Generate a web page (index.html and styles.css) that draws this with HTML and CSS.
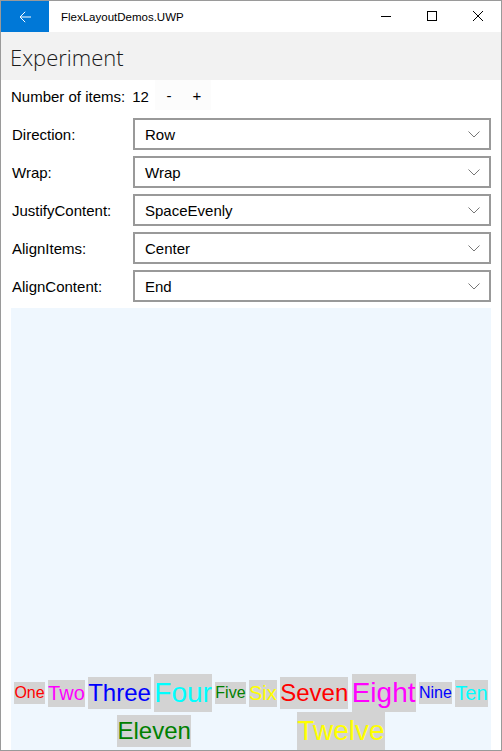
FILE: index.html
```html
<!DOCTYPE html>
<html>
<head>
<meta charset="utf-8">
<link rel="stylesheet" href="styles.css">
</head>
<body>
<div class="window">
  <div class="titlebar">
    <div class="back">
      <svg width="12" height="12" viewBox="0 0 12 12"><path d="M12 6H1.2M6.2 0.8L1 6l5.2 5.2" stroke="#fff" stroke-width="1" fill="none"/></svg>
    </div>
    <div class="apptitle">FlexLayoutDemos.UWP</div>
    <div class="captions">
      <div class="cbtn"><svg width="10" height="10" viewBox="0 0 10 10"><path d="M0 5.5H10" stroke="#000" fill="none"/></svg></div>
      <div class="cbtn"><svg width="10" height="10" viewBox="0 0 10 10"><rect x="0.5" y="0.5" width="9" height="9" stroke="#000" fill="none"/></svg></div>
      <div class="cbtn"><svg width="10" height="10" viewBox="0 0 10 10"><path d="M0 0L10 10M10 0L0 10" stroke="#000" fill="none"/></svg></div>
    </div>
  </div>
  <div class="pageheader">Experiment</div>
  <div class="content">
    <div class="countrow">
      <span>Number of items:</span><span class="count">12</span>
      <span class="stepper"><span class="sbtn">-</span><span class="sbtn">+</span></span>
    </div>
    <div class="form">
      <div class="label">Direction:</div>
      <div class="combo"><span>Row</span><svg width="12" height="7" viewBox="0 0 12 7"><path d="M0.5 0.5L6 6L11.5 0.5" stroke="#777" fill="none"/></svg></div>
      <div class="label">Wrap:</div>
      <div class="combo"><span>Wrap</span><svg width="12" height="7" viewBox="0 0 12 7"><path d="M0.5 0.5L6 6L11.5 0.5" stroke="#777" fill="none"/></svg></div>
      <div class="label">JustifyContent:</div>
      <div class="combo"><span>SpaceEvenly</span><svg width="12" height="7" viewBox="0 0 12 7"><path d="M0.5 0.5L6 6L11.5 0.5" stroke="#777" fill="none"/></svg></div>
      <div class="label">AlignItems:</div>
      <div class="combo"><span>Center</span><svg width="12" height="7" viewBox="0 0 12 7"><path d="M0.5 0.5L6 6L11.5 0.5" stroke="#777" fill="none"/></svg></div>
      <div class="label">AlignContent:</div>
      <div class="combo"><span>End</span><svg width="12" height="7" viewBox="0 0 12 7"><path d="M0.5 0.5L6 6L11.5 0.5" stroke="#777" fill="none"/></svg></div>
    </div>
    <div class="flexarea">
      <div class="item s16 red">One</div>
      <div class="item s20 magenta">Two</div>
      <div class="item s24 blue">Three</div>
      <div class="item s28 cyan">Four</div>
      <div class="item s16 green">Five</div>
      <div class="item s20 yellow">Six</div>
      <div class="item s24 red">Seven</div>
      <div class="item s28 magenta">Eight</div>
      <div class="item s16 blue">Nine</div>
      <div class="item s20 cyan">Ten</div>
      <div class="item s24 green">Eleven</div>
      <div class="item s28 yellow">Twelve</div>
    </div>
  </div>
</div>
</body>
</html>
```

FILE: styles.css
```css
* { box-sizing: border-box; }
html, body { margin: 0; padding: 0; background: #fff; }
body { font-family: "Liberation Sans", Arial, sans-serif; color: #000; }

.window {
  width: 502px;
  height: 751px;
  border: 1px solid #9a9a9a;
  display: flex;
  flex-direction: column;
  overflow: hidden;
  background: #fff;
}

.titlebar {
  height: 31px;
  display: flex;
  align-items: center;
  background: #fff;
  flex: none;
}
.back {
  width: 48px;
  height: 31px;
  background: #0078d7;
  display: flex;
  align-items: center;
  justify-content: center;
}
.back svg { display: block; margin-top: 1px; }
.apptitle {
  margin-left: 12px;
  font-size: 11.5px;
  flex: 1;
}
.captions { display: flex; height: 31px; }
.cbtn {
  width: 46px;
  height: 31px;
  display: flex;
  justify-content: center;
}
.cbtn svg { display: block; margin-top: 10px; }

.pageheader {
  height: 48px;
  background: #f2f2f2;
  display: flex;
  align-items: center;
  padding: 2px 0 0 9px;
  font-family: "Open Sans", "Liberation Sans", sans-serif;
  font-weight: 300;
  font-size: 22px;
  color: #1a1a1a;
  flex: none;
}

.content {
  flex: 1;
  display: flex;
  flex-direction: column;
  padding: 0 9px 0 10px;
  min-height: 0;
}

.countrow {
  height: 32px;
  display: flex;
  align-items: center;
  font-size: 15px;
  flex: none;
  padding-top: 1px;
}
.count { margin-left: 7px; }
.stepper { display: flex; margin-left: 6px; align-self: flex-start; margin-top: -1px; }
.sbtn {
  width: 28px;
  height: 30px;
  display: flex;
  align-items: center;
  justify-content: center;
  background: #fcfcfc;
}

.form {
  margin-top: 6px;
  display: grid;
  grid-template-columns: 122px 358px;
  grid-auto-rows: 32px;
  row-gap: 6px;
  flex: none;
}
.label {
  font-size: 15px;
  display: flex;
  align-items: center;
  padding-left: 1px;
}
.combo {
  border: 2px solid #999;
  display: flex;
  align-items: center;
  justify-content: space-between;
  padding: 0 9px 0 10px;
  font-size: 15px;
}
.combo svg { display: block; margin-top: 1px; }

.flexarea {
  margin-top: 6px;
  width: 480px;
  flex: 1;
  background: #eff7fe;
  display: flex;
  flex-wrap: wrap;
  justify-content: space-evenly;
  align-items: center;
  align-content: flex-end;
}
.item { background: #d3d3d3; white-space: nowrap; }
.s16 { font-size: 16px; line-height: 22px; }
.s20 { font-size: 20px; line-height: 27px; }
.s24 { font-size: 24px; line-height: 32px; }
.s28 { font-size: 28px; line-height: 38px; }
.red { color: #ff0000; }
.magenta { color: #ff00ff; }
.blue { color: #0000ff; }
.cyan { color: #00ffff; }
.green { color: #008000; }
.yellow { color: #ffff00; }
```
